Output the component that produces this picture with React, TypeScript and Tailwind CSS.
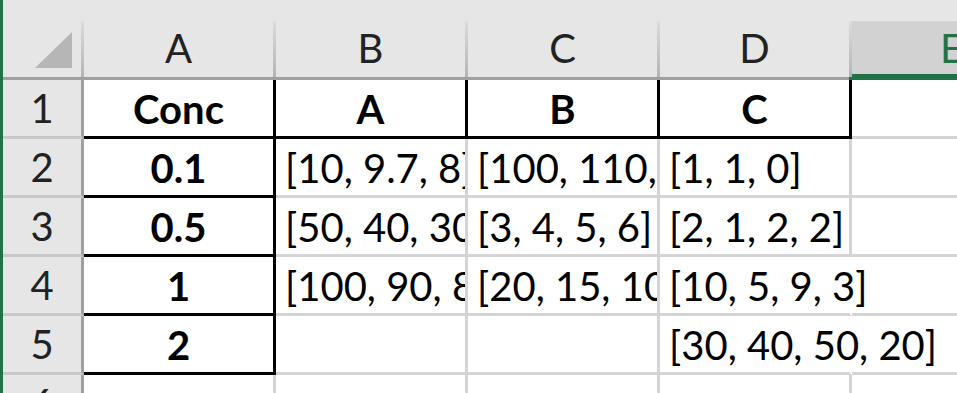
import React from 'react';
import clsx from 'clsx';

type Cell = { text: string; bold?: boolean };

const rows: Cell[][] = [
  [{ text: 'Conc', bold: true }, { text: 'A', bold: true }, { text: 'B', bold: true }, { text: 'C', bold: true }],
  [{ text: '0.1', bold: true }, { text: '[10, 9.7, 8]' }, { text: '[100, 110, 120]' }, { text: '[1, 1, 0]' }],
  [{ text: '0.5', bold: true }, { text: '[50, 40, 30, 20]' }, { text: '[3, 4, 5, 6]' }, { text: '[2, 1, 2, 2]' }],
  [{ text: '1', bold: true }, { text: '[100, 90, 80, 70]' }, { text: '[20, 15, 10, 5]' }, { text: '[10, 5, 9, 3]' }],
  [{ text: '2', bold: true }, { text: '' }, { text: '' }, { text: '[30, 40, 50, 20]' }],
  [{ text: '' }, { text: '' }, { text: '' }, { text: '' }],
];

function ColHeader({ label }: { label: string }) {
  return (
    <>
      <div className="w-[189px] flex-none flex items-end justify-center pb-[9px]">
        <span className="text-[40px] leading-none text-[#222]">{label}</span>
      </div>
      <div className="w-[3px] flex-none bg-gradient-to-b from-[#dcdcdc] to-[#b4b4b4]" />
    </>
  );
}

function DataCell({ cell, row, col }: { cell: Cell; row: number; col: number }) {
  // rows are 1-based like the sheet
  const boxed = (col === 0 && row <= 5) || row === 1;
  const spills = col === 3 && (row === 4 || row === 5);

  return (
    <div
      className={clsx(
        'w-[192px] flex-none flex items-end border-r-[3px] border-b-[3px]',
        boxed ? 'border-black' : 'border-[#d4d4d4]',
        spills && 'border-r-white overflow-visible',
        !spills && 'overflow-hidden',
        cell.bold ? 'justify-center' : 'justify-start pl-[9px]'
      )}
    >
      <span
        className={clsx(
          'text-[40px] leading-none whitespace-nowrap text-black pb-[7px]',
          cell.bold && 'font-bold'
        )}
      >
        {cell.text}
      </span>
    </div>
  );
}

export default function App() {
  return (
    <div className="w-[957px] h-[393px] overflow-hidden bg-white flex font-['Lato',sans-serif]">
      <div className="w-[3px] flex-none bg-[#217346]" />

      <div className="flex-1 flex flex-col min-w-0">
        <div className="h-[21px] flex-none bg-[#e6e6e6]" />

        {/* column headers */}
        <div className="h-[56px] flex-none flex bg-[#e6e6e6]">
          <div className="w-[78px] flex-none flex items-end justify-end pr-[9px] pb-[9px]">
            <svg width="37" height="36" viewBox="0 0 37 36">
              <polygon points="37,0 37,36 0,36" fill="#b6b6b6" />
            </svg>
          </div>
          <div className="w-[3px] flex-none bg-gradient-to-b from-[#dcdcdc] to-[#b4b4b4]" />
          <ColHeader label="A" />
          <ColHeader label="B" />
          <ColHeader label="C" />
          <ColHeader label="D" />
          <div className="flex-1 bg-[#d2d2d2] border-b-[3px] border-[#217346] flex items-end pl-[88px] pb-[6px] overflow-hidden">
            <span className="text-[40px] leading-none text-[#217346]">E</span>
          </div>
        </div>
        <div className="h-[3px] flex-none flex">
          <div className="w-[846px] flex-none bg-[#a0a0a0]" />
          <div className="flex-1 bg-[#217346]" />
        </div>

        {/* body rows */}
        {rows.map((cells, i) => (
          <div key={i} className="h-[59px] flex-none flex">
            <div className="w-[81px] flex-none bg-[#e6e6e6] border-r-[3px] border-r-[#a0a0a0] border-b-[3px] border-b-[#c8c8c8] flex items-end justify-center pb-[8px]">
              <span className="text-[40px] leading-none text-[#222]">{i + 1}</span>
            </div>
            {cells.map((cell, c) => (
              <DataCell key={c} cell={cell} row={i + 1} col={c} />
            ))}
            <div className="flex-1 border-b-[3px] border-[#d4d4d4]" />
          </div>
        ))}
      </div>
    </div>
  );
}
